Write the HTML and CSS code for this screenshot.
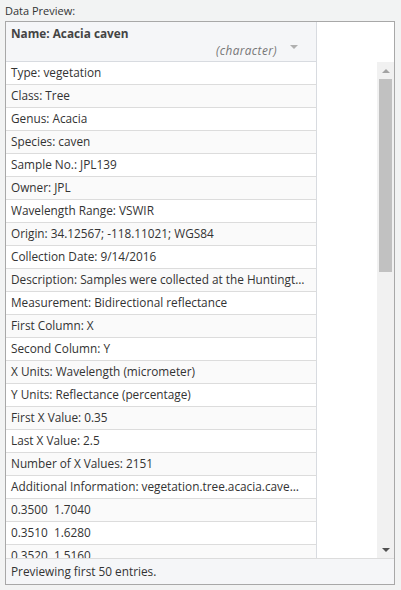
FILE: index.html
```html
<!DOCTYPE html>
<html>
<head>
<meta charset="utf-8">
<link rel="stylesheet" href="styles.css">
</head>
<body>
<div class="label">Data Preview:</div>
<div class="panel">
  <div class="head">
    <div class="head-cell">
      <div class="head-name">Name: Acacia caven</div>
      <div class="head-type"><span class="type-text">(character)</span><span class="sort"></span></div>
    </div>
    <div class="head-rest"></div>
  </div>
  <div class="body">
    <div class="rows">
      <div class="row">Type: vegetation</div>
      <div class="row">Class: Tree</div>
      <div class="row">Genus: Acacia</div>
      <div class="row">Species: caven</div>
      <div class="row">Sample No.: JPL139</div>
      <div class="row">Owner: JPL</div>
      <div class="row">Wavelength Range: VSWIR</div>
      <div class="row">Origin: 34.12567; -118.11021; WGS84</div>
      <div class="row">Collection Date: 9/14/2016</div>
      <div class="row">Description: Samples were collected at the Huntington Botanical Gardens</div>
      <div class="row">Measurement: Bidirectional reflectance</div>
      <div class="row">First Column: X</div>
      <div class="row">Second Column: Y</div>
      <div class="row">X Units: Wavelength (micrometer)</div>
      <div class="row">Y Units: Reflectance (percentage)</div>
      <div class="row">First X Value: 0.35</div>
      <div class="row">Last X Value: 2.5</div>
      <div class="row">Number of X Values: 2151</div>
      <div class="row add">Additional Information: vegetation.tree.acacia.caven.vswir.jpl139.jpl.asd.ancillary.txt</div>
      <div class="row pre">0.3500  1.7040</div>
      <div class="row pre">0.3510  1.6280</div>
      <div class="row pre">0.3520  1.5160</div>
    </div>
    <div class="filler"></div>
    <div class="scrollbar">
      <div class="arrow up"></div>
      <div class="track"><div class="thumb"></div></div>
      <div class="arrow down"></div>
    </div>
  </div>
  <div class="footer">Previewing first 50 entries.</div>
</div>
</body>
</html>
```
FILE: styles.css
```css
html, body {
  margin: 0;
  padding: 0;
}
body {
  background: #f2f3f3;
  font-family: "Open Sans", "DejaVu Sans", sans-serif;
  font-size: 11px;
  color: #333;
  width: 401px;
  height: 590px;
  overflow: hidden;
}
.label {
  padding: 3px 0 0 5px;
  height: 18px;
  line-height: 15px;
}
.panel {
  margin-left: 5px;
  width: 388px;
  border: 1px solid #a8a8a8;
  background: #fff;
  font-size: 11.8px;
}
.head {
  display: flex;
  height: 40px;
}
.head-cell {
  border-right: 1px solid #d8dbe0;
  border-bottom: 1px solid #d8dbe0;
  background: #f5f6f8;
  box-sizing: border-box;
  width: 311px;
  padding: 3px 5px 0 5px;
}
.head-name {
  font-weight: bold;
  line-height: 16px;
  color: #444;
}
.head-type {
  display: flex;
  justify-content: flex-end;
  align-items: center;
  margin-top: 1px;
  line-height: 16px;
}
.type-text {
  font-style: italic;
  color: #777;
  letter-spacing: 0.4px;
}
.sort {
  width: 0;
  height: 0;
  border-left: 4px solid transparent;
  border-right: 4px solid transparent;
  border-top: 4px solid #b0b0b0;
  margin: 0 13px 6px 13px;
}
.head-rest {
  flex: 1;
  background: #fff;
}
.body {
  display: flex;
  height: 496px;
  overflow: hidden;
}
.rows {
  width: 311px;
  flex: none;
}
.row {
  box-sizing: border-box;
  height: 23px;
  line-height: 21px;
  padding: 0 5px;
  border-right: 1px solid #d8dbe0;
  border-bottom: 1px solid #dcdcdc;
  white-space: nowrap;
  overflow: hidden;
  text-overflow: ellipsis;
  background: #fff;
}
.row:nth-child(even) {
  background: #fafafa;
}
.row.add {
  padding-right: 10px;
}
.row.pre {
  white-space: pre;
}
.filler {
  flex: 1;
  background: #fff;
}
.scrollbar {
  width: 17px;
  flex: none;
  background: #f1f1f1;
  display: flex;
  flex-direction: column;
}
.arrow {
  height: 17px;
  flex: none;
  display: flex;
  align-items: center;
  justify-content: center;
}
.arrow.up::before {
  content: "";
  border-left: 4px solid transparent;
  border-right: 4px solid transparent;
  border-bottom: 4px solid #a3a3a3;
}
.arrow.down::before {
  content: "";
  border-left: 4px solid transparent;
  border-right: 4px solid transparent;
  border-top: 4px solid #505050;
}
.track {
  flex: 1;
  padding: 0 2px;
}
.thumb {
  height: 193px;
  background: #c1c1c1;
}
.footer {
  height: 25px;
  border-top: 1px solid #dcdcdc;
  background: #f5f6f8;
  line-height: 24px;
  padding-left: 5px;
}
```
